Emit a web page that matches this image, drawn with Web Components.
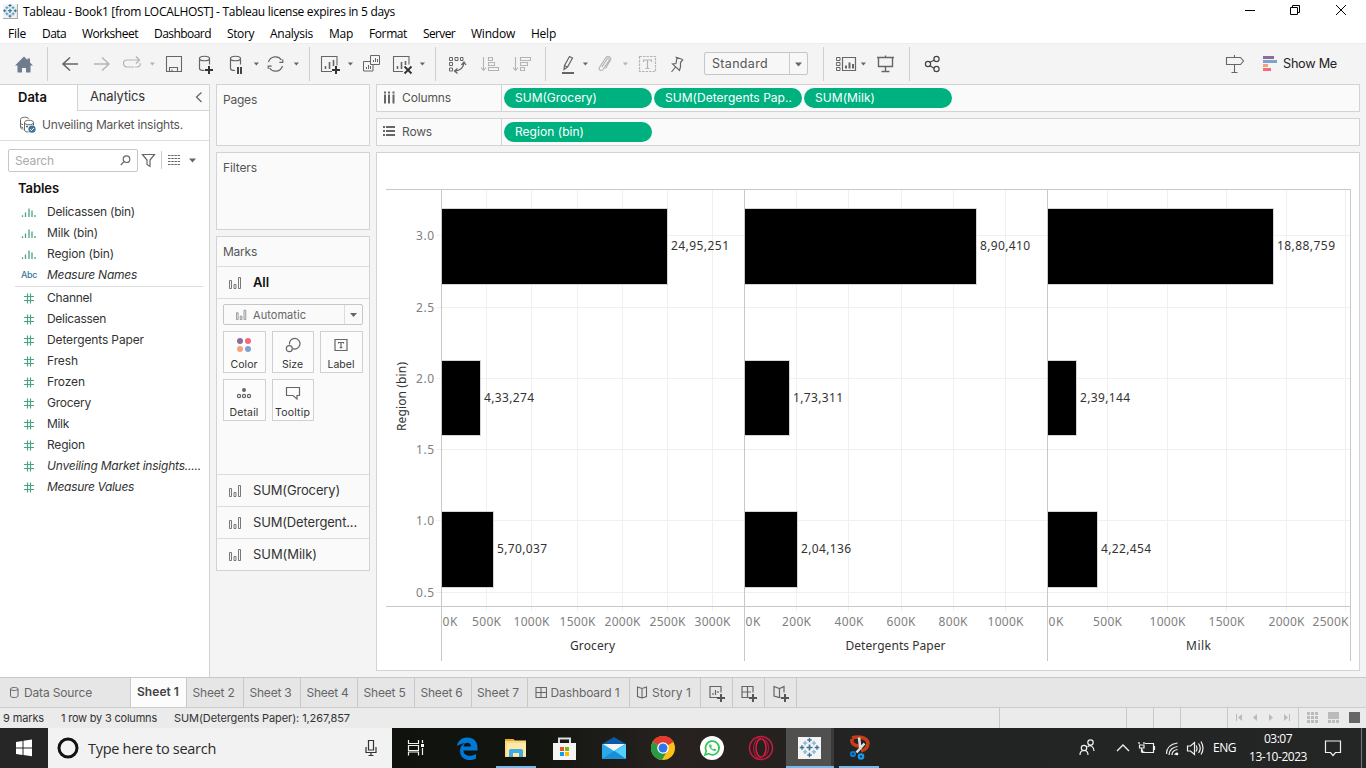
<!DOCTYPE html>
<html lang="en">
<head>
<meta charset="utf-8">
<title>Tableau - Book1</title>
<style>
html,body{margin:0;height:100%;overflow:hidden;background:#f4f4f4;font-family:Inter,"Noto Sans",sans-serif;font-size:12px;color:#333}
</style>
</head>
<body>
<app-window></app-window>
<script>
const define=(name,css,html,setup)=>customElements.define(name,class extends HTMLElement{
  connectedCallback(){
    if(this.shadowRoot)return;
    const r=this.attachShadow({mode:'open'});
    r.innerHTML='<style>:host{display:block;box-sizing:border-box}*{box-sizing:border-box}svg{display:block;flex:none}'+css+'</style>'+(typeof html==='function'?html(this):html);
    if(setup)setup(this,r);
  }
});

/* Single-line text whose tracking is adjusted to fill the width given in w */
define('fit-text',':host{display:block;flex:none;white-space:pre}span{display:inline-block;white-space:pre}','<span><slot></slot></span>',(el,r)=>{
  const w=+el.getAttribute('w');if(!w)return;
  const s=r.querySelector('span'),n=el.textContent.length;
  s.style.letterSpacing=((w-s.getBoundingClientRect().width)/n)+'px';
  el.style.width=w+'px';
});
const T=(w,t,style='')=>`<fit-text w="${w}" style="${style}">${t}</fit-text>`;

/* Builds a horizontal run of items [x, width, html], spaced by margins */
const run=(start,items)=>{let c=start;return items.map(([x,w,h])=>{const m=x-c;c=x+w;return `<div style="margin-left:${m}px;width:${w}px;flex:none">${h}</div>`}).join('')};
/* Icon in a full-height row, drawn in window coordinates */
const glyph=(top,height)=>(x,w,body)=>[x,w,`<svg width="${w}" height="${height}" viewBox="${x} ${top} ${w} ${height}" fill="none" stroke="#666" stroke-width="1.2">${body}</svg>`];

const star=(cx,cy,k,dark,light)=>{
  const p=(x,y,r,c,o=1.1)=>`<path d="M${cx+(x-r)*k} ${cy+y*k}h${2*r*k}M${cx+x*k} ${cy+(y-r)*k}v${2*r*k}" stroke="${c}" stroke-width="${o*k}" fill="none"/>`;
  return p(0,0,2.4,dark,1.3)+p(0,-6,1.8,dark)+p(0,6,1.8,dark)+p(-6,0,1.8,dark)+p(6,0,1.8,dark)+p(-3.5,-3.5,1.7,light)+p(3.5,-3.5,1.7,light)+p(-3.5,3.5,1.7,light)+p(3.5,3.5,1.7,light);
};

define('title-bar',':host{height:24px;display:flex;align-items:center;background:#fff;color:#000;font:12px "Open Sans",sans-serif}',()=>{
  const g=glyph(0,24);
  return run(0,[
    g(3,15,`<rect x="3" y="4" width="15" height="15" fill="#f2f2f2" stroke="none"/><path d="M17.5 4v14.5H3" stroke="#aaa"/>${star(10,10.8,.88,'#1f6d97','#4a93bb')}`),
    [23,372,T(372,'Tableau - Book1 [from LOCALHOST] - Tableau license expires in 5 days','margin-top:-1px')],
    g(1244,12,'<path d="M1245 10.5h10" stroke="#000" stroke-width="1"/>'),
    g(1289,12,'<path d="M1290.5 7.5h7v7h-7zM1292.500 7v-1.500h7v7h-1.500" stroke="#000" stroke-width="1"/>'),
    g(1335,12,'<path d="M1336 5l10 10M1346 5l-10 10" stroke="#000" stroke-width="1"/>')
  ]);
});
define('menu-bar',':host{height:19px;background:#fff;display:flex;color:#000;font:12px/19px "Open Sans",sans-serif}',()=>
  run(0,[['File',8,18],['Data',42,24],['Worksheet',82,56],['Dashboard',154,57],['Story',227,27],['Analysis',270,43],['Map',329,24],['Format',369,38],['Server',423,32],['Window',471,44],['Help',531,25]].map(([t,x,w])=>[x,w,T(w,t)])));

define('tool-bar',':host{height:41px;display:flex;align-items:center;background:#f4f4f4;box-shadow:inset 0 1px #eee}.sel{width:104px;height:23px;border:1px solid #c6c6c6;border-radius:2px;display:flex;align-items:center;background:#f7f7f7;font-size:12.5px;color:#555}.sel fit-text{margin-left:7px}.sel svg{margin-left:auto}',()=>{
  const g=glyph(43,41);
  const sep=x=>g(x,1,`<path d="M${x+.5} 47v34" stroke="#cfcfcf" stroke-width="1"/>`);
  const dd=(x,c='#666')=>g(x,7,`<path d="M${x+.8} 62.500h5.200l-2.600 3z" fill="${c}" stroke="none"/>`);
  const L='#b4b4b4';
  return run(0,[
    g(15,18,'<path d="M24 56.500l3.500 3.500v-1.500h2.500v4l3 3h-2.500v7h-4.500v-4.500h-4v4.500h-4.500v-7h-2.500z" fill="#6f7c8c" stroke="none"/>'),
    sep(47),
    g(61,18,'<path d="M78 64h-15M70 57.500l-7 6.500 7 6.500" stroke-width="1.6"/>'),
    g(93,18,`<path d="M94 64h15M102 57.500l7 6.500-7 6.500" stroke="${L}" stroke-width="1.4"/>`),
    g(122,20,`<path d="M134 67h-7a3.500 3.500 0 0 1 0-7h12M136 56.500l3.500 3.500-3.500 3.500M135 67h2.500a3 3 0 0 0 2.600-4" stroke="${L}"/>`),
    dd(149,L),
    g(165,18,'<path d="M166.500 56.500h15v15h-15zM169.500 71.500v-4h8v4M172 71.500v-2" stroke-width="1.100"/>'),
    g(198,17,'<path d="M199.500 58.500v10c0 1.500 2 2 5 2M209.500 58.500v6M199.500 58.500c0-3 10-3 10 0s-10 3-10 0" stroke-width="1.200"/><path d="M205 70h8M209 66v8" stroke="#333" stroke-width="2"/>'),
    g(229,16,'<path d="M230.500 58.500v10c0 1.500 2 2 4.500 2M240.500 58.500v6M230.500 58.500c0-3 10-3 10 0s-10 3-10 0"/><path d="M238 67v7M241 67v7" stroke="#444" stroke-width="2"/>'),
    dd(253),
    g(266,19,'<path d="M268.500 62a7.300 7.300 0 0 1 13-2M282.500 66a7.300 7.300 0 0 1-13 2M282.800 59.500v2.800h-3.500M268.200 68.800v-2.600h3.500"/>'),
    dd(293),sep(309),
    g(320,22,'<path d="M332 71.500h-10.500v-15h15.500v9" stroke-width="1.100"/><path d="M325.500 69v-3M329.500 69v-7M333.500 66v-6" stroke-width="1.600"/><path d="M332 70h8M336 66v8" stroke="#333" stroke-width="2"/>'),
    dd(347),
    g(362,19,'<path d="M370.500 55.500h9v9h-9zM370 61.500h-6.500v9.500h9.500v-6M366.500 69v-2M368.500 69v-4M370.500 69v-3M373.500 62v-2M375.500 62v-4M377.500 62v-3" stroke-width="1"/>'),
    g(392,22,'<path d="M403 71.500h-9.500v-15h15.500v8" stroke-width="1.100"/><path d="M397.500 69v-3M401.500 69v-7M405.500 65v-4" stroke-width="1.600"/><path d="M404.500 66.500l7 7M411.500 66.500l-7 7" stroke="#333" stroke-width="1.900"/>'),
    dd(419),sep(435),
    g(448,19,'<path d="M449.500 57.500h3v3h-3zM455 57.500h3v3h-3zM460.500 57.500h2.500v3h-2.500zM449.500 62.500h3v3h-3zM449.500 68h3v3h-3z" stroke-width="1"/><path d="M464 62.500c-.5 5-3 8-9 8.500M461.500 65l2.500-3 2 3M457.500 68.500l-3 2.500 3 2.500" stroke-width="1.300"/>'),
    g(480,20,`<path d="M483.500 57v13M481 67.500l2.500 3 2.500-3M488.500 57.500h4v3h-4zM488.500 62.500h6v3h-6zM488.500 67.500h10v3h-10z" stroke="${L}" stroke-width="1.100"/>`),
    g(512,20,`<path d="M515.500 57v13M513 67.500l2.500 3 2.500-3M520.500 57.500h10v3h-10zM520.500 62.500h7v3h-7zM520.500 67.500h4v3h-4z" stroke="${L}" stroke-width="1.100"/>`),
    sep(545),
    g(561,14,'<path d="M562 73h12" stroke-width="2"/><path d="M564 69.500l.5-4 5-9 3 1.500-5 9zM564.500 65.500l3 1.500"/>'),
    dd(582),
    g(598,15,`<path d="M602 67l5-8c1-1.500 3-.5 2 1.500l-6 9c-1.500 2-5 .5-3.500-2l6-9.500c2-3 6.500-1 5 2l-5 8.500" stroke="${L}"/>`),
    dd(622,L),
    g(638,20,`<path d="M639.500 56.500h16v15h-16z" stroke="${L}" stroke-dasharray="2.500 1"/><path d="M643.500 62v-2h8v2M647.500 60v8M645.500 68.500h4" stroke="${L}"/>`),
    g(670,16,'<path d="M675.500 57l7 2.500M677 57.500l-1 6-3.500.5 7 6.500 1-3.500v-4.500l2.500-3M675.500 67l-4 5"/>'),
    [704,104,`<div class="sel">${T(56,'Standard')}<svg width="18" height="21" viewBox="0 0 18 21"><path d="M.5 0v21" stroke="#ccc"/><path d="M6 9.500h7l-3.500 4z" fill="#666"/></svg></div>`],
    sep(823),
    g(835,23,'<path d="M836.500 57.500h3.500v3h-3.500zM836.500 62.500h3.500v3h-3.500zM836.500 67.500h3.500v3h-3.500z" stroke-width="1"/><path d="M842.500 57.500h13v13h-13z"/><path d="M846 68.500v-3M849.500 68.500v-6M853 68.500v-4.500" stroke-width="2"/>'),
    dd(860),
    g(876,19,'<path d="M877 57.500h17M878.500 57.500v9h14v-9M885.500 66.500v5M881.500 71.500h8M885.500 57.500v-2" stroke-width="1.400"/>'),
    sep(909),
    g(924,17,'<path d="M929.500 62.500l5-2.500M929.500 65.500l5 3" stroke="#444"/><circle cx="928" cy="64" r="2.600" stroke="#444"/><circle cx="936.500" cy="59" r="2.600" stroke="#444"/><circle cx="936.500" cy="69" r="2.600" stroke="#444"/>'),
    g(1225,20,'<path d="M1234.500 55v2.500M1226.500 57.500h14l3 3.500-3 3.500h-14zM1234.500 64.500v8M1231.500 72.500h6" stroke-width="1.100"/>'),
    g(1262,16,'<g stroke="none"><path d="M1263 56h11v3h-11z" fill="#8a6d9c"/><path d="M1263 60h14v3h-14z" fill="#7fa3cf"/><path d="M1263 64h5v3h-5z" fill="#f4a27c"/><path d="M1263 68h8v3h-8z" fill="#f9677d"/></g>'),
    [1283,54,T(54,'Show Me','font-size:12.700px;color:#222')]
  ]);
});

const bars=(c='#777')=>`<svg width="13" height="13" fill="none" stroke="${c}" stroke-width="1"><path d="M.5 4.500h2v8h-2zM5 8.500h2v4h-2zM9.500 1.500h2v11h-2z"/></svg>`;
const fieldIcons={
  bin:'<svg width="16" height="12" fill="none" stroke="#4ba384" stroke-width="1.300"><path d="M1.500 11v-1.800M4.500 11V6.500M8 11V2.500M11 11V4.500M14 11V9"/></svg>',
  abc:T(16,'Abc','font-size:9px;font-weight:500;color:#38789b;line-height:21px'),
  num:'<svg width="16" height="12" fill="none" stroke="#4ba384" stroke-width="1.200"><path d="M3 4.500h10M3 8.500h10M6.500 1.500v10M9.500 1.500v10"/></svg>'
};
define('data-field',':host{height:21px;display:flex;align-items:center;color:#333}.i{width:16px;margin:0 10px 0 21px;flex:none}:host([italic]) fit-text.name{font-style:italic}',
  el=>`<div class="i">${fieldIcons[el.getAttribute('kind')]}</div><fit-text class="name" w="${el.getAttribute('w')}">${el.getAttribute('name')}</fit-text>`);

define('data-pane',`:host{width:210px;height:593px;background:#fff;border-top:1px solid #d3d3d3;border-right:1px solid #d3d3d3}
.tabs{display:flex;height:26px;line-height:25px;font-size:13px}.d{width:77px;padding-left:18px;font-weight:600;color:#111}.a{flex:1;display:flex;align-items:center;background:#fafafa;border-left:1px solid #d3d3d3;border-bottom:1px solid #d3d3d3;padding:0 6px 2px 12px}.a svg{margin-left:auto}
.src{height:30px;display:flex;align-items:center;border-bottom:1px solid #ddd;padding:0 0 2px 19px;gap:5px;color:#555;font-size:12px}
.find{display:flex;height:39px;padding:8px 0 0 8px;align-items:flex-start}.box{width:130px;height:23px;border:1px solid #c6c6c6;border-radius:2px;display:flex;align-items:center;padding:0 6px;color:#aaa}.box svg{margin-left:auto}
.h{font-weight:600;font-size:13px;color:#111;height:21px;line-height:16px;padding-left:18px}.line{height:1px;background:#ddd;margin:1px 6px 0 15px}`,()=>{
  const f=(k,n,w,i='')=>`<data-field kind="${k}" name="${n}" w="${w}" ${i}></data-field>`;
  return `<div class="tabs"><div class="d">${T(29,'Data')}</div><div class="a">${T(55,'Analytics')}<svg width="8" height="12" fill="none" stroke="#666" stroke-width="1.300"><path d="M6.500 1.500L1.500 6l5 5"/></svg></div></div>
<div class="src"><svg width="18" height="18" fill="none" stroke="#666"><path d="M1.500 3.500v8c0 1 1.500 1.500 3 1.500M1.500 3.500c0-3 8-3 8-.5M1.500 6.500c0 1.500 1 2 2.500 2M1.500 9.500c0 1.500 1 2 2.500 2"/><path d="M5.500 6.500c0-3 9-3 9 0s-9 3-9 0v7.500c0 1.500 2 2 4 2M14.500 6.500v3M7 10.500h2M8 9.500v2"/><circle cx="13" cy="13.200" r="3.600" fill="#38789b" stroke="none"/><path d="M11.200 13.200l1.300 1.400 2.300-2.600" stroke="#fff"/></svg>${T(141,'Unveiling Market insights.')}</div>
<div class="find"><div class="box">${T(39,'Search')}<svg width="11" height="11" fill="none" stroke="#666" stroke-width="1.200"><circle cx="6.500" cy="4.200" r="3.300"/><path d="M4 6.600L.8 10"/></svg></div>
<svg width="70" height="23" viewBox="138 148 70 23" fill="none" stroke="#666"><path d="M142.500 153.500h12l-4.500 5.500v6.500l-3-2v-4.500z" stroke-width="1.200"/><path d="M161.500 150v18" stroke="#ccc"/><path d="M168 154.500h12M168 157.500h12M168 160.500h12M168 163.500h12" stroke-dasharray="2.500 .7"/><path d="M189 157.500h7l-3.500 4z" fill="#666" stroke="none"/></svg></div>
<div class="h">${T(41,'Tables')}</div>
${f('bin','Delicassen (bin)',88)}${f('bin','Milk (bin)',51)}${f('bin','Region (bin)',67)}${f('abc','Measure Names',90,'italic')}<div class="line"></div>
${f('num','Channel',45)}${f('num','Delicassen',59)}${f('num','Detergents Paper',97)}${f('num','Fresh',31)}${f('num','Frozen',38)}${f('num','Grocery',44)}${f('num','Milk',22)}${f('num','Region',38)}${f('num','Unveiling Market insights.....',154,'italic')}${f('num','Measure Values',87,'italic')}`;
});

define('shelf-card',':host{background:#fafafa;border:1px solid #d3d3d3;padding:8px 6px;line-height:14px;color:#555;width:154px}','<slot></slot>');
define('mark-row',':host{height:32px;border-top:1px solid #ddd;display:flex;align-items:center;font-size:13px;color:#333;padding:0 0 2px 12px;gap:11px}svg{position:relative;top:1px}',el=>bars()+T(el.getAttribute('w'),el.textContent,el.hasAttribute('bold')?'font-weight:600;color:#111':''));
define('mark-button',':host{height:42px;border:1px solid #d0d0d0;display:flex;flex-direction:column;align-items:center;background:#fcfcfc;font-size:10.500px;line-height:13px;color:#333;padding-right:1px}svg{margin:4px 0 4px}',el=>`<svg width="18" height="18" fill="none" stroke="#666" stroke-width="1.200">${({
  Color:'<g stroke="none"><circle cx="5" cy="5" r="3" fill="#8a6d9c"/><circle cx="13" cy="5" r="3" fill="#f9677d"/><circle cx="5" cy="13" r="3" fill="#f4a27c"/><circle cx="13" cy="13" r="3" fill="#7fa3cf"/></g>',
  Size:'<path d="M5.500 8.500a5.300 5.300 0 1 1 3 4"/><circle cx="5.300" cy="12.700" r="3"/>',
  Label:'<path d="M3 3.500h12v11H3z"/><path d="M6.500 7.500v-1h5v1M9 6.500v5M7.700 11.700h2.600"/>',
  Detail:'<circle cx="9" cy="6" r="2" fill="#666" stroke="none"/><circle cx="4" cy="12" r="1.600"/><circle cx="9" cy="12" r="1.600"/><circle cx="14" cy="12" r="1.600"/>',
  Tooltip:'<path d="M2.500 3.500h13v8h-2.500v3.500l-4-3.500h-6.500z"/>'})[el.textContent]}</svg>${T(el.getAttribute('w'),el.textContent)}`);
define('marks-card',`:host{width:154px;height:335px;background:#fafafa;border:1px solid #d3d3d3;color:#555}
.h{height:29px;padding:8px 6px;line-height:14px}.body{height:176px;border-top:1px solid #ddd;padding:5px 6px}.auto{height:21px;border:1px solid #c6c6c6;border-radius:2px;display:flex;align-items:center;gap:5px;padding-left:11px;font-size:11px;color:#666}.auto>svg:first-child{transform:scale(.85)}.auto svg:last-child{margin-left:auto}
.g{display:grid;grid-template-columns:43px 42px 43px;gap:6px 6px;margin-top:6px}`,
`<div class="h">${T(34,'Marks')}</div><mark-row w="16" bold>All</mark-row>
<div class="body"><div class="auto">${bars('#888')}${T(53,'Automatic')}<svg width="18" height="19"><path d="M.5 0v19" stroke="#ddd"/><path d="M6 8h7l-3.500 4z" fill="#666"/></svg></div>
<div class="g"><mark-button w="27">Color</mark-button><mark-button w="21">Size</mark-button><mark-button w="27">Label</mark-button><mark-button w="29">Detail</mark-button><mark-button w="35">Tooltip</mark-button></div></div>
<mark-row w="87">SUM(Grocery)</mark-row><mark-row w="104">SUM(Detergent...</mark-row><mark-row w="64">SUM(Milk)</mark-row>`);

define('field-pill',':host{width:148px;height:20px;border-radius:10px;background:#00b180;color:#fff;line-height:20px;padding-left:11px;font-size:12px;flex:none}',el=>T(el.getAttribute('w'),el.textContent));
define('pill-shelf',':host{height:28px;background:#fafafa;border:1px solid #d3d3d3;display:flex;align-items:center;color:#555}.l{width:125px;height:100%;border-right:1px solid #d3d3d3;display:flex;align-items:center;padding:0 0 1px 6px;gap:7px}.p{display:flex;gap:2px;padding-left:2px}',el=>{
  const col=el.getAttribute('label')==='Columns';
  return `<div class="l"><svg width="12" height="13" stroke="#666" stroke-width="2" fill="none">${col?'<path d="M2 .5v2M2 3.500v9M6 .5v2M6 3.500v9M10.500 .5v2M10.500 3.500v9"/>':'<path d="M0 2h2M3 2h9M0 6h2M3 6h9M0 10h2M3 10h9"/>'}</svg>${T(col?49:30,el.getAttribute('label'))}</div><div class="p"><slot></slot></div>`;
});

define('chart-view',':host{height:519px;background:#fff;border:1px solid #d3d3d3}text{font-family:"Noto Sans",sans-serif;font-size:12px}',()=>{
  const t=(x,y,w,s,c='#333',a='start')=>`<text x="${x}" y="${y}" textLength="${w}" text-anchor="${a}" fill="${c}">${s}</text>`;
  let s='<g stroke="#f0f0f0">';
  const ys=[235.5,307.5,378.5,449.5,520.5,592.5];
  ys.forEach(y=>s+=`<path d="M436 ${y}H1350"/>`);
  [486,531,577,622,667,712,796,848,901,953,1005,1107,1167,1226,1286,1345].forEach(x=>s+=`<path d="M${x+.5} 190V611"/>`);
  s+='</g>';
  [[442,[[667,'24,95,251',58],[480,'4,33,274',50],[493,'5,70,037',50]]],[745,[[976,'8,90,410',50],[789,'1,73,311',50],[797,'2,04,136',50]]],[1048,[[1273,'18,88,759',58],[1076,'2,39,144',50],[1097,'4,22,454',50]]]].forEach(([x,b])=>b.forEach(([e,l,w],i)=>{
    const y=[209,361,512][i],h=[75,74,75][i];
    s+=`<rect x="${x-.5}" y="${y-.5}" width="${e-x+1}" height="${h+1}" fill="#000" stroke="#d5d5d5"/><rect x="${x}" y="${y}" width="${e-x}" height="${h}" fill="#000"/>`+t(e+4,[250,402,553][i],w,l);
  }));
  s+='<g stroke="#c8c8c8"><path d="M386 189.500H1350M386 606.500H1350"/>'+[441,744,1047,1350].map(x=>`<path d="M${x+.5} 189V661"/>`).join('')+'</g>';
  ['3.0','2.5','2.0','1.5','1.0','0.5'].forEach((l,i)=>s+=t(434,[240,312,383,454,525,597][i],18,l,'#808080','end'));
  [[442,15,'0K'],[471.5,29,'500K'],[513,36,'1000K'],[559,36,'1500K'],[604,36,'2000K'],[649,36,'2500K'],[694,36,'3000K'],[745,15,'0K'],[781.500,29,'200K'],[834,29,'400K'],[886,29,'600K'],[938,29,'800K'],[987,36,'1000K'],[1048,15,'0K'],[1092.500,29,'500K'],[1149,36,'1000K'],[1208,36,'1500K'],[1268,36,'2000K'],[1312,36,'2500K']].forEach(([x,w,l])=>s+=t(x+.5,626,w,l,'#808080'));
  s+=t(570,650,45,'Grocery')+t(845.500,650,100,'Detergents Paper')+t(1186,650,25,'Milk');
  s+=`<g transform="translate(406 431) rotate(-90)">${t(0,0,69,'Region (bin)')}</g>`;
  return `<svg width="982" height="517" viewBox="377 153 982 517" fill="none">${s}</svg>`;
});

define('sheet-tab',':host{height:100%;border-right:1px solid #c8c8c8;display:flex;align-items:center;justify-content:center;gap:4px;color:#666;flex:none;padding-right:3px}:host([active]){background:#fcfcfc;color:#444;font-weight:600;padding:0 1px 2px 0}','<slot></slot>');
define('sheet-tabs',':host{height:31px;display:flex;background:#e6e6e6;border-top:1px solid #c8c8c8;border-bottom:1px solid #ccc}',()=>{
  const s=(w,b,a='')=>`<sheet-tab style="width:${w}px;${a==='active'?'':a}" ${a==='active'?a:''}>${b}</sheet-tab>`;
  const i=(p)=>`<svg width="20" height="18" fill="none" stroke="#666" stroke-width="1.200">${p}</svg>`,c='padding:0';
  const grid='<path d="M1 3.500h10.500v10H1zM6 3.500v10M1 8.500h10.500"/>',book='<path d="M1.500 3l4.500 1.500L10.500 3v9.500L6 14l-4.500-1.500zM6 4.500V14"/>';
  const half=p=>`<svg width="12" height="18" fill="none" stroke="#666" stroke-width="1.100">${p}</svg>`,plus='<path d="M10 14h8M14 10v8" stroke="#555" stroke-width="2"/>';
  return s(131,`<svg width="10" height="14" fill="none" stroke="#666"><path d="M1.500 3v7c0 2 7.500 2 7.500 0V3M1.500 3c0-2 7.500-2 7.500 0s-7.500 2-7.500 0"/></svg>${T(68,'Data Source')}`,'justify-content:flex-start;gap:5px;padding-left:9px')
  +s(56,T(42,'Sheet 1'),'active')+[57,57,57,57,57,56].map((w,k)=>s(w,T(42,'Sheet '+(k+2)))).join('')
  +s(102,half(grid)+T(69,'Dashboard 1'))+s(71,half(book)+T(39,'Story 1'))
  +s(32,i('<path d="M10 13.500H3v-11h11v6M6 11V9M8.500 11V6M11 9V7"/>'+plus),c)+s(32,i('<path d="M10 13.500H3v-11h11v6M8.500 2.500v11M3 8h9"/>'+plus),c)+s(32,i('<path d="M9.500 13l-1 .5L3 12V2.500L8.500 4.500 13 2.500v6M8.500 4.500V13"/>'+plus),c);
});
define('status-bar',':host{height:20px;display:flex;background:#ebebeb;color:#333;font-size:11px;line-height:20px}',()=>{
  const g=glyph(708,20),sep=x=>g(x,1,`<path d="M${x+.5} 708v20" stroke="#c8c8c8"/>`);
  const fill=(x,w,p,c='#bbb')=>g(x,w,`<path d="${p}" fill="${c}" stroke="none"/>`);
  let grid='';for(let a=0;a<3;a++)for(let b=0;b<3;b++)grid+=`M${1307+a*4} ${712+b*4}h3v3h-3z`;
  return run(0,[[3,41,T(41,'9 marks')],[61,96,T(96,'1 row by 3 columns')],[174,176,T(176,'SUM(Detergents Paper): 1,267,857')],
    sep(999),sep(1126),sep(1153),sep(1180),sep(1227),
    fill(1235,8,'M1236 714h1v7h-1zM1242 714v7l-4-3.500z'),fill(1252,6,'M1257 714v7l-4-3.500z'),fill(1268,6,'M1269 714v7l4-3.500z'),fill(1283,8,'M1289 714h1v7h-1zM1284 714v7l4-3.500z'),sep(1298),
    fill(1306,14,grid),fill(1327,13,'M1328 712h11v7h-11zM1328 720h3v3h-3zM1332 720h3v3h-3zM1336 720h3v3h-3z'),fill(1348,13,'M1349 712h11v11h-11z','#666')]);
});

define('task-bar',`:host{height:40px;display:flex;background:linear-gradient(90deg,#262626 0 48px,#10130d 392px,#12150f 530px,#272220 680px,#25211f 760px,#222424 870px,#242525);color:#fff;font:12px "Open Sans",sans-serif}
.search{width:344px;height:40px;background:#f2f2f2;display:flex;align-items:center;color:#2b2b2b;font-size:14.500px}.search fit-text{margin-left:8px}.search svg:last-child{margin-left:auto;margin-right:14px}
.clock{display:flex;flex-direction:column;align-items:center;line-height:18px;padding-top:2px}`,()=>{
  const g=glyph(728,40),W='stroke="#f0f0f0"';
  return run(0,[
    g(0,48,'<path d="M16 742l6.500-1v6.500H16zM23.500 740.800l8.500-1.200v7.900h-8.500zM16 748.500h6.500v6.500l-6.500-1zM23.500 748.500h8.500v7.800l-8.500-1.200z" fill="#fff" stroke="none"/>'),
    [48,344,`<div class="search"><svg width="32" height="40"><circle cx="20" cy="20" r="9" fill="none" stroke="#111" stroke-width="3"/></svg>${T(128,'Type here to search')}<svg width="14" height="18" fill="none" stroke="#333" stroke-width="1.200"><path d="M4.500 1.500h5v9.500h-5zM2 8v5.500h10V8M7 13.500V17M4.500 16.500h5"/></svg></div>`],
    g(406,20,`<path d="M408.500 740v3.500h10V740M408.500 755.500v-3.500h10v3.500M408.500 745.500h10v5h-10zM422.500 740v3M422.500 748v7" ${W}/><path d="M421 744h3v3h-3z" fill="#fff" stroke="none"/>`),
    g(456,22,'<path d="M457 746c1-5.500 5-8.500 10-8.500 6.500 0 10.500 4 10.500 10v3h-14c0 6 8 6.500 12.500 3.500v4.500c-7 3.500-16 1-16-7.500 0-4 2-6.500 5.500-8-3.500.500-6.500 1.500-8.500 3zm6.500 .5h7.500c0-5-7-5-7.500 0z" fill="#0078d7" stroke="none"/>'),
    g(496,40,'<g stroke="none"><path d="M505 739h8l2 1.500h11V757h-21z" fill="#fadb83"/><path d="M505 739h8l2 2h-10z" fill="#e9ac25"/><path d="M507 743h19v13h-19z" fill="#ffe9a7"/><path d="M509 757v-6c0-1 .5-2 1.500-2h10.500c1.500 0 2 1 2 2v6h-4v-4h-6v4z" fill="#3dade6"/><path d="M496 766h40v2h-40z" fill="#76b9ed"/></g>'),
    g(552,26,'<path d="M559 743v-4.500h11v4.500" stroke="#ddd" stroke-width="2"/><path d="M553 743h23v17h-23z" fill="#f4f4f4" stroke="none"/><g stroke="none"><path d="M560 747h4v4h-4z" fill="#f25022"/><path d="M565 747h4v4h-4z" fill="#7fba00"/><path d="M560 752h4v4h-4z" fill="#00a4ef"/><path d="M565 752h4v4h-4z" fill="#ffb900"/></g>'),
    g(601,26,'<g stroke="none"><path d="M602 744l12-7 12 7-12 8z" fill="#0c59a4"/><path d="M602 744h24v15h-24z" fill="#2aa9e8"/><path d="M603 744h22l-11 7z" fill="#f5f5f5"/><path d="M626 744v15l-11-8z" fill="#50d0fa"/><path d="M602 759l12-8 12 8z" fill="#1a8fd5"/></g>'),
    g(650,26,'<g stroke="none"><circle cx="663" cy="748" r="12" fill="#fbc116"/><path d="M663 748L652.600 742a12 12 0 0 1 20.800 0z" fill="#e33b2e"/><path d="M652.600 742a12 12 0 0 0 9.500 18l5-9.500-4-2.500z" fill="#279b48"/><path d="M652.600 742a12 12 0 0 1 20.800 0H663z" fill="#e33b2e"/><circle cx="663" cy="748" r="5.800" fill="#fff"/><circle cx="663" cy="748" r="4.500" fill="#3076ea"/></g>'),
    g(699,26,'<circle cx="712" cy="748" r="12" fill="#fff" stroke="none"/><path d="M705 755l1.200-4a6.800 6.800 0 1 1 2.600 2.800z" stroke="#36c65a" stroke-width="1.700"/><path d="M709.500 744.500c-1.500 2 2.500 7 6 6.500l.8-1.500-2-1-1 1c-1-.5-1.800-1.200-2.200-2.200l.7-1-.8-1.800z" fill="#36c65a" stroke="none"/>'),
    g(748,26,'<circle cx="761" cy="748" r="11.500" stroke="#c51b40" stroke-width="1.500"/><ellipse cx="761" cy="748" rx="5" ry="9" stroke="#df1b46" stroke-width="1.500"/><path d="M761 739c9-1 11 17 0 18M761 737c-10 3-10 20 0 22" stroke="#a81a38"/>'),
    g(786,48,`<path d="M786 728h45v40h-45z" fill="#50504f" stroke="none"/><path d="M831 728h3v40h-3z" fill="#393a3a" stroke="none"/><path d="M798 737h23v22h-23z" fill="#f2f4f6" stroke="none"/>${star(809.5,747.5,1.25,'#397595','#8cb3cb')}<path d="M786 766h48v2h-48z" fill="#76b9ed" stroke="none"/>`),
    g(839,40,'<path d="M852 738c6-2 15-1 16 5 0 5-3 7-7 8M852 739c-1 4 2 7 7 7" stroke="#c83c16" stroke-width="3.500"/><path d="M859 737.500l1.500 12M864.500 743.500l-8 9" stroke="#ddd" stroke-width="2.600"/><circle cx="853" cy="754" r="2" stroke="#087fce" stroke-width="2.200"/><circle cx="861" cy="756.500" r="2.200" stroke="#169dec" stroke-width="2.200"/><path d="M839 766h40v2h-40z" fill="#76b9ed" stroke="none"/>'),
    g(1078,18,`<circle cx="1090.500" cy="742.500" r="2.700" ${W}/><circle cx="1084" cy="748" r="2.700" ${W}/><path d="M1080 755c0-6 8-6 8 0M1087.500 747c3-3 6.500 0 6.500 4" ${W}/>`),
    g(1115,16,`<path d="M1117 751l6-6 6 6" ${W} stroke-width="1.400"/>`),
    g(1138,18,`<path d="M1145 743.500h8.500v9h-11v-3M1154.500 746v4M1139 742v2M1144 742v2M1139.500 745h4.500v3h-4.500zM1141.500 748v4h3" ${W}/>`),
    g(1165,15,`<path d="M1166.500 754c0-6 4-10 11-11M1169 755c0-5 4-8 8.500-8.500M1172 755c0-3 2.500-5 5.500-5.500M1175 755c0-1 1-2 2.500-2" ${W}/><circle cx="1177" cy="754" r="1.300" fill="#fff" stroke="none"/>`),
    g(1186,18,`<path d="M1187.500 746v5h3l4 3.500v-12l-4 3.500zM1196 745.500q2 3 0 6M1198.500 743.500q3.500 5 0 9.500M1201 741.500q4 7 0 13" ${W}/>`),
    [1213,23,T(23,'ENG','line-height:40px')],
    [1249,58,`<div class="clock">${T(28,'03:07')}${T(58,'13-10-2023')}</div>`],
    g(1324,18,`<path d="M1325.500 741h15v11.500h-5l-2.500 3-2.500-3h-5z" ${W}/>`),
    g(1361,1,'<path d="M1361.500 728v40" stroke="#777"/>')
  ]);
});

define('app-window',`:host{width:1366px;height:768px;overflow:hidden}.main{display:flex;height:593px}.cards{margin-left:6px;width:154px;display:flex;flex-direction:column;gap:6px}.view{margin-left:6px;width:984px;display:flex;flex-direction:column;gap:6px}.pages{height:62px}.filters{height:78px}`,
`<title-bar></title-bar><menu-bar></menu-bar><tool-bar></tool-bar>
<div class="main"><data-pane></data-pane>
<div class="cards"><shelf-card class="pages">${T(34,'Pages')}</shelf-card><shelf-card class="filters">${T(34,'Filters')}</shelf-card><marks-card></marks-card></div>
<div class="view"><pill-shelf label="Columns"><field-pill w="82">SUM(Grocery)</field-pill><field-pill w="127">SUM(Detergents Pap..</field-pill><field-pill w="60">SUM(Milk)</field-pill></pill-shelf>
<pill-shelf label="Rows"><field-pill w="69">Region (bin)</field-pill></pill-shelf><chart-view></chart-view></div></div>
<sheet-tabs></sheet-tabs><status-bar></status-bar><task-bar></task-bar>`);
</script>
</body>
</html>
